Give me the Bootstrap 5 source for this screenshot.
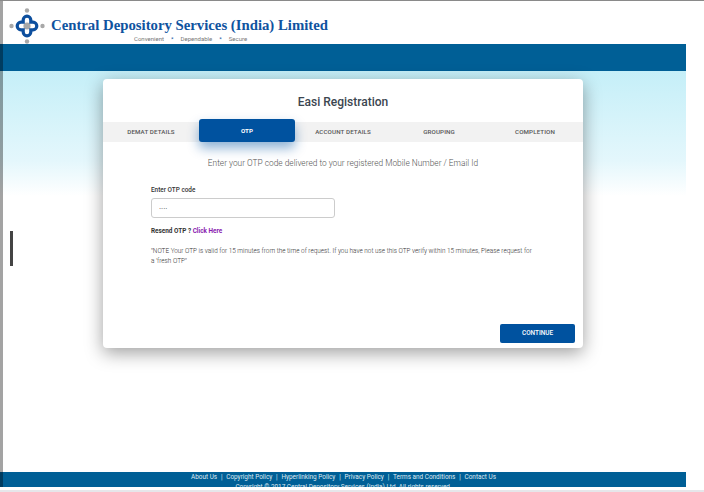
<!DOCTYPE html>
<html lang="en">
<head>
<meta charset="utf-8">
<title>Easi Registration</title>
<link href="https://cdn.jsdelivr.net/npm/bootstrap@5.3.0/dist/css/bootstrap.min.css" rel="stylesheet">
<style>
html,body{height:492px;overflow:hidden;background:#fff}
body{font-family:Roboto,"Liberation Sans",sans-serif;position:relative;padding-top:1px}
.topline{height:1px;background:#8a8a8a;position:absolute;top:0;left:0;width:100%}
.frame{width:686px;height:486px}
.brand{height:43px;padding:7px 0 0 9px}
.brand-name{font-family:"Liberation Serif",serif;font-weight:700;font-size:14.75px;line-height:18px;color:#0f539f;margin-top:8px;margin-left:6px;white-space:nowrap}
.brand-tag{font-size:6px;line-height:7px;color:#777;margin-left:89px;margin-top:1px;white-space:nowrap}
.brand-tag b{color:#0f539f;margin:0 7px;font-weight:400}
.blue-bar{height:27px;background:#005f96}
.stage{height:401px;background:linear-gradient(#c5eff8 0,#e4f7fc 90px,#fff 125px);padding:8px 0 0 103px}
.panel{width:480px;height:269px;background:#fff;border-radius:4px;box-shadow:0 5px 18px rgba(0,0,0,.38)}
.panel-title{font-size:12px;font-weight:500;color:#3c4650;text-align:center;height:43px;padding-top:16px;line-height:15px}
.step-strip{height:20px;background:#f2f2f2;font-size:6.2px;font-weight:500;color:#555;display:grid;grid-template-columns:96px 96px 96px 96px 96px}
.step-item{text-align:center;line-height:20px;letter-spacing:.12px}
.step-on{background:#00529f;color:#fff;height:23px;margin-top:-3px;line-height:24px;border-radius:3px;box-shadow:0 6px 12px rgba(0,82,159,.45);font-weight:700}
.intro{font-size:8.35px;font-weight:300;color:#555;text-align:center;margin-top:16px;line-height:11px}
.form-zone{padding:17px 48px 0}
.f-label{font-size:6.4px;font-weight:500;color:#333;line-height:8px;margin-bottom:4px}
.f-input.form-control{width:184px;height:20px;min-height:0;padding:0 7px;font-size:8px;line-height:18px;border-radius:3px;border-color:#ccc;color:#444}
.resend{font-size:6.4px;font-weight:700;color:#333;line-height:8px;margin-top:9px}
.resend a{color:#8a1cb0;text-decoration:none}
.note-text{font-size:6.4px;font-weight:300;color:#333;line-height:10px;margin-top:11px;width:384px}
.go-row{padding:0 8px 0 0;margin-top:58px}
.go-btn.btn{width:75px;height:19px;padding:0;background:#00529f;border:0;border-radius:2px;color:#fff;font-size:6.4px;font-weight:500;line-height:19px}
.foot-bar{height:15px;background:#005f96;color:#dfeaf2;font-size:6.4px;line-height:10px;text-align:center;overflow:hidden}
.foot-bar p{margin:0;padding-left:1px;white-space:nowrap}
.foot-bar i{font-style:normal;margin:0 3.8px}
.bottom-line{position:absolute;top:490px;left:0;width:100%;height:2px;background:#e6e6ea}
.side-mark{position:absolute;left:10px;top:231px;width:3px;height:35px;background:#444}
.side-strip{position:absolute;left:0;top:1px;width:3px;height:486px;background:rgba(0,0,0,.36)}
</style>
</head>
<body>
<div class="topline"></div>
<div class="frame d-flex flex-column">
  <div class="brand d-flex align-items-start">
    <svg width="36" height="36" viewBox="0 0 36 36" style="flex:none">
      <g fill="#a8a8a8"><circle cx="18" cy="2.500" r="2.200"/><circle cx="18" cy="33.500" r="2.200"/><circle cx="2.500" cy="18" r="2.200"/><circle cx="33.500" cy="18" r="2.200"/><circle cx="18" cy="18" r="3.600"/></g>
      <path d="M14.200 12a3.800 3.800 0 0 1 7.600 0V14.200H24a3.800 3.800 0 0 1 0 7.600H21.800V24a3.800 3.800 0 0 1-7.600 0V21.800H12a3.800 3.800 0 0 1 0-7.600H14.200z" fill="none" stroke="#0d4f9e" stroke-width="3.200"/>
    </svg>
    <div>
      <div class="brand-name">Central Depository Services (India) Limited</div>
      <div class="brand-tag">Convenient<b>*</b>Dependable<b>*</b>Secure</div>
    </div>
  </div>
  <div class="blue-bar"></div>
  <div class="stage">
    <div class="panel d-flex flex-column">
      <div class="panel-title">Easi Registration</div>
      <div class="step-strip">
        <div class="step-item">DEMAT DETAILS</div>
        <div class="step-item step-on">OTP</div>
        <div class="step-item">ACCOUNT DETAILS</div>
        <div class="step-item">GROUPING</div>
        <div class="step-item">COMPLETION</div>
      </div>
      <div class="intro">Enter your OTP code delivered to your registered Mobile Number / Email Id</div>
      <div class="form-zone">
        <div class="f-label">Enter OTP code</div>
        <input class="form-control f-input" type="text" value="····" aria-label="Enter OTP code">
        <div class="resend">Resend OTP ? <a href="#">Click Here</a></div>
        <div class="note-text">"NOTE Your OTP is valid for 15 minutes from the time of request. If you have not use this OTP verify within 15 minutes, Please request for a 'fresh OTP"</div>
      </div>
      <div class="go-row d-flex justify-content-end"><button class="btn go-btn" type="button">CONTINUE</button></div>
    </div>
  </div>
  <div class="foot-bar">
    <p>About Us<i>|</i>Copyright Policy<i>|</i>Hyperlinking Policy<i>|</i>Privacy Policy<i>|</i>Terms and Conditions<i>|</i>Contact Us</p>
    <p>Copyright © 2017 Central Depository Services (India) Ltd. All rights reserved.</p>
  </div>
</div>
<div class="side-strip"></div>
<div class="side-mark"></div>
<div class="bottom-line"></div>
<script src="https://cdn.jsdelivr.net/npm/bootstrap@5.3.0/dist/js/bootstrap.bundle.min.js"></script>
</body>
</html>
